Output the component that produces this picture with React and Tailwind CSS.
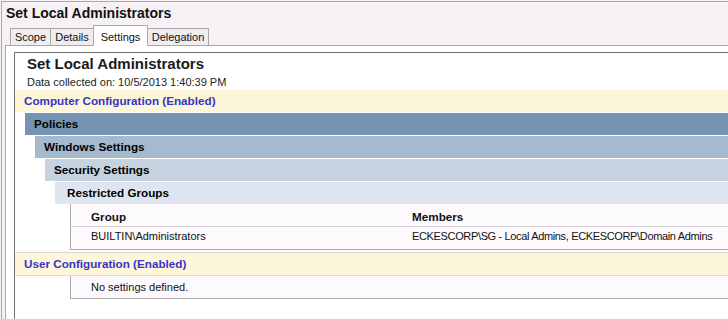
import React from "react";

const F = { fontFamily: '"Liberation Sans", Arial, sans-serif' };

function Band({ label, color, pad = "pl-[9px]", children }) {
  return (
    <div>
      <div
        className={`h-[23px] border-t border-white flex items-center ${pad} text-[11.7px] font-bold text-black whitespace-nowrap ${color}`}
      >
        {label}
      </div>
      {children}
    </div>
  );
}

export default function App() {
  return (
    <div
      style={F}
      className="w-[728px] h-[319px] overflow-hidden bg-[#f5f1f5] pt-px pl-px"
    >
      <div className="h-full border-l border-t border-[#a9a9a9] flex flex-col">
        <div className="h-[23px] flex items-center pl-[4px] text-[14px] font-bold text-[#111] whitespace-nowrap">
          Set Local Administrators
        </div>
        <div className="h-[21px] flex items-end pl-[8px] text-[11px] text-[#111] relative z-10">
          <div className="w-[40px] h-[17px] border-l border-t border-[#a9a9a9] bg-[#f0edf0] flex items-center justify-center mb-px">
            Scope
          </div>
          <div className="w-[43px] h-[17px] border-l border-t border-[#a9a9a9] bg-[#f0edf0] flex items-center justify-center mb-px">
            Details
          </div>
          <div className="w-[55px] h-[21px] border-l border-t border-r border-[#a9a9a9] bg-white flex items-start pt-[3px] justify-center">
            Settings
          </div>
          <div className="w-[61px] h-[17px] border-t border-r border-[#a9a9a9] bg-[#f0edf0] flex items-center justify-center mb-px">
            Delegation
          </div>
        </div>
        <div className="flex-1 ml-[3px] -mt-px border-l border-t border-[#a9a9a9] bg-white pl-[8px] pt-[6px]">
          <div className="h-full border-l border-t border-[#6f6f6f] bg-white">
            <div className="h-[22px] flex items-center pl-[12px] text-[15px] font-bold text-[#1a1a1a] whitespace-nowrap">
              Set Local Administrators
            </div>
            <div className="h-[15px] flex items-center pl-[12px] text-[11px] text-[#222] whitespace-nowrap">
              Data collected on: 10/5/2013 1:40:39 PM
            </div>
            <div className="h-[22px] bg-[#fef6d9] flex items-center pl-[9px] text-[11.7px] font-bold text-[#3535c8] whitespace-nowrap">
              Computer Configuration (Enabled)
            </div>
            <div className="ml-[10px]">
              <Band label="Policies" color="bg-[#7594b3]">
                <div className="ml-[10px]">
                  <Band label="Windows Settings" color="bg-[#a6bacd]">
                    <div className="ml-[10px]">
                      <Band label="Security Settings" color="bg-[#c6d2df]">
                        <div className="ml-[10px]">
                          <Band label="Restricted Groups" color="bg-[#dfe5ef]" pad="pl-[12px]">
                            <div className="ml-[15px] border-l border-b border-[#a9a9a9] bg-[#fdfafd] text-[11px] text-[#111] whitespace-nowrap overflow-hidden">
                              <div className="h-[23px] flex items-center pt-[3px] pl-[20px] font-bold text-[11.7px] border-b border-[#d4d0d4]">
                                <div className="w-[321px] shrink-0">Group</div>
                                <div>Members</div>
                              </div>
                              <div className="h-[22px] flex items-center pb-[3px] pl-[20px]">
                                <div className="w-[321px] shrink-0">BUILTIN\Administrators</div>
                                <div className="tracking-[-0.35px]">ECKESCORP\SG - Local Admins, ECKESCORP\Domain Admins</div>
                              </div>
                            </div>
                          </Band>
                        </div>
                      </Band>
                    </div>
                  </Band>
                </div>
              </Band>
            </div>
            <div className="mt-[2px] h-[24px] bg-[#fef6d9] border-y border-[#dcd8d0] flex items-center pl-[9px] text-[11.7px] font-bold text-[#3535c8] whitespace-nowrap">
              User Configuration (Enabled)
            </div>
            <div className="ml-[55px] h-[23px] border-l border-b border-[#a9a9a9] bg-[#fdfafd] flex items-center pl-[20px] text-[11px] text-[#111] whitespace-nowrap">
              No settings defined.
            </div>
          </div>
        </div>
      </div>
    </div>
  );
}
